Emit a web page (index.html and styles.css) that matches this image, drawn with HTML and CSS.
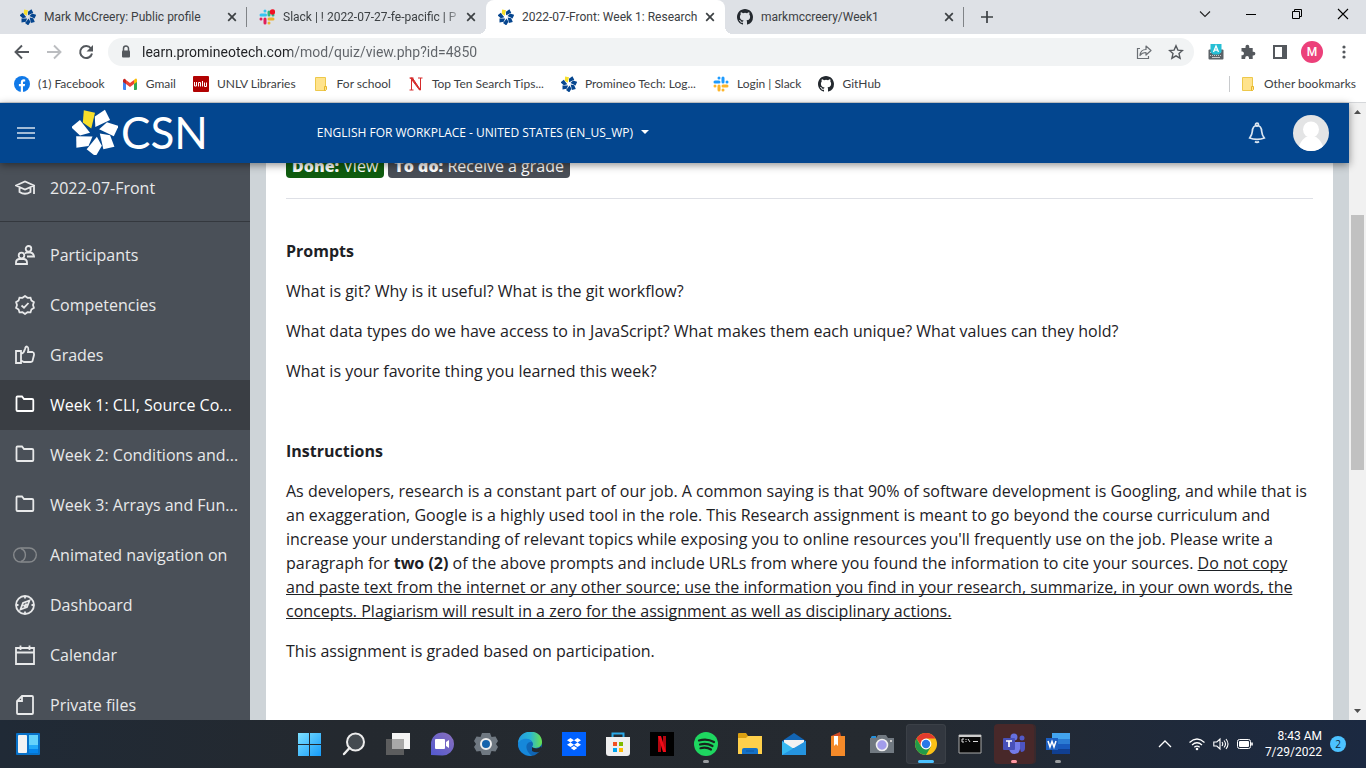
FILE: index.html
```html
<!DOCTYPE html>
<html lang="en">
<head>
<meta charset="utf-8">
<title>2022-07-Front: Week 1: Research</title>
<link rel="stylesheet" href="styles.css">
</head>
<body>
<svg class="defs" aria-hidden="true">
  <defs>
    <path id="petal" d="M-33-64 0-57-11-10-36-28z"/>
    <symbol id="flower" viewBox="-68 -68 136 136">
      <g class="petals"><use href="#petal" class="petal-gold"/><use href="#petal" transform="rotate(51.4)"/><use href="#petal" transform="rotate(102.9)"/><use href="#petal" transform="rotate(154.3)"/><use href="#petal" transform="rotate(205.7)"/><use href="#petal" transform="rotate(257.1)"/><use href="#petal" transform="rotate(308.6)"/></g>
    </symbol>
    <symbol id="github" viewBox="0 0 16 16"><path fill="#24292f" d="M8 0C3.58 0 0 3.58 0 8c0 3.54 2.29 6.53 5.47 7.59.4.07.55-.17.55-.38 0-.19-.01-.82-.01-1.49-2.01.37-2.53-.49-2.69-.94-.09-.23-.48-.94-.82-1.13-.28-.15-.68-.52-.01-.53.63-.01 1.08.58 1.23.82.72 1.21 1.87.87 2.33.66.07-.52.28-.87.51-1.07-1.78-.2-3.64-.89-3.64-3.95 0-.87.31-1.59.82-2.15-.08-.2-.36-1.02.08-2.12 0 0 .67-.21 2.2.82a7.6 7.6 0 0 1 4 0c1.53-1.04 2.2-.82 2.2-.82.44 1.1.16 1.92.08 2.12.51.56.82 1.27.82 2.15 0 3.07-1.87 3.75-3.65 3.95.29.25.54.73.54 1.48 0 1.07-.01 1.93-.01 2.2 0 .21.15.46.55.38A8 8 0 0 0 16 8c0-4.42-3.58-8-8-8z"/></symbol>
    <symbol id="close" viewBox="0 0 16 16"><path d="M4.200 4.200l7.600 7.600M11.800 4.200l-7.600 7.600" stroke="#3c4043" stroke-width="1.700" fill="none"/></symbol>
    <symbol id="bm-folder" viewBox="0 0 16 16"><path d="M2.500 1.500h10v13h-10z" fill="#ffe38c" stroke="#edc84b"/><path d="M11.500 10.500h2v3l-1 1h-1z" fill="#ffe38c" stroke="#e7b72b"/></symbol>
    <symbol id="folder" viewBox="0 0 20 20"><path d="M1.500 2.500q0-1 1-1h4.500l2 2.500h8q1.300 0 1.300 1.300v9.700q0 1-1 1h-14.800q-1 0-1-1z"/></symbol>
  </defs>
</svg>

<header class="browser">
  <div class="tabs">
    <div class="tab tab-divided"><svg class="i16 blue-flower"><use href="#flower"/></svg><span class="tab-title">Mark McCreery: Public profile</span><button class="close" aria-label="Close tab"><svg class="i16"><use href="#close"/></svg></button></div>
    <div class="tab"><svg class="i16" viewBox="0 0 16 16"><g fill="none" stroke-width="3" stroke-linecap="round"><path stroke="#36c5f0" d="M6 2v0M2 6h4.500"/><path stroke="#2eb67d" d="M10 6V3M14 6v0"/><path stroke="#e01e5a" d="M6 10v4M2 10v0"/><path stroke="#ecb22e" d="M10 14v0M10 10h4"/></g><circle cx="13.500" cy="3" r="2.700" fill="#f11022"/></svg><span class="tab-title tab-fade">Slack | ! 2022-07-27-fe-pacific | P</span><button class="close" aria-label="Close tab"><svg class="i16"><use href="#close"/></svg></button></div>
    <div class="tab tab-active"><svg class="i16 blue-flower"><use href="#flower"/></svg><span class="tab-title">2022-07-Front: Week 1: Research</span><button class="close" aria-label="Close tab"><svg class="i16"><use href="#close"/></svg></button></div>
    <div class="tab tab-divided"><svg class="i16"><use href="#github"/></svg><span class="tab-title">markmccreery/Week1</span><button class="close" aria-label="Close tab"><svg class="i16"><use href="#close"/></svg></button></div>
    <button class="new-tab" aria-label="New tab"><svg class="i16" viewBox="0 0 16 16"><path d="M8 2v12M2 8h12" stroke="#3c4043" stroke-width="1.700"/></svg></button>
    <div class="window-buttons">
      <button aria-label="Search tabs"><svg class="i16" viewBox="0 0 16 16"><path d="M3 5.500l5 5 5-5" fill="none" stroke="#222" stroke-width="1.100"/></svg></button>
      <button aria-label="Minimize"><svg class="i16" viewBox="0 0 16 16"><path d="M3 8.500h10" stroke="#000"/></svg></button>
      <button aria-label="Restore"><svg class="i16" viewBox="0 0 16 16"><path d="M3.500 5.500h7v7h-7zM5.500 5.500v-2h7v7h-2" fill="none" stroke="#000"/></svg></button>
      <button aria-label="Close window"><svg class="i16" viewBox="0 0 16 16"><path d="M3 3l10 10M13 3L3 13" stroke="#000" stroke-width="1.100"/></svg></button>
    </div>
  </div>

  <div class="toolbar">
    <button class="tool" aria-label="Back"><svg class="i16" viewBox="0 0 16 16"><path d="M15 8H2M8 1.500L1.500 8 8 14.500" fill="none" stroke="#54585d" stroke-width="1.900"/></svg></button>
    <button class="tool" aria-label="Forward"><svg class="i16" viewBox="0 0 16 16"><path d="M1 8h13M8 1.500L14.500 8 8 14.500" fill="none" stroke="#bbbdc0" stroke-width="1.900"/></svg></button>
    <button class="tool" aria-label="Reload"><svg class="i16" viewBox="0 0 16 16"><path d="M13 4.500A6 6 0 1 0 14 9.500" fill="none" stroke="#54585d" stroke-width="2"/><path d="M15 1v6.500H8.500z" fill="#54585d"/></svg></button>
    <div class="omnibox">
      <svg class="lock" viewBox="0 0 16 16"><rect x="4" y="6.500" width="8" height="7" rx="1" fill="#54585d"/><path d="M5.500 7V4.500a2.500 2.500 0 0 1 5 0V7" fill="none" stroke="#54585d" stroke-width="1.500"/></svg>
      <input class="address" type="text" aria-label="Address" value="learn.promineotech.com/mod/quiz/view.php?id=4850">
      <button class="tool" aria-label="Share"><svg class="i16" viewBox="0 0 16 16"><path d="M4 4.500H1.500v10h11V12" fill="none" stroke="#6b6f74" stroke-width="1.200"/><path d="M4 11.500q.5-6 6-6v-3.500l5 4.500-5 4.500V8.500q-4 0-6 3z" fill="none" stroke="#6b6f74" stroke-width="1.200" stroke-linejoin="round"/></svg></button>
      <button class="tool" aria-label="Bookmark"><svg class="i16" viewBox="0 0 16 16"><path d="M8 1.800l1.900 4.300 4.600.4-3.500 3.100 1.100 4.600L8 11.800l-4.100 2.400L5 9.600 1.500 6.500l4.600-.4z" fill="none" stroke="#54585d" stroke-width="1.400"/></svg></button>
    </div>
    <button class="tool" aria-label="Keyboard extension"><svg class="i16" viewBox="0 0 16 16"><path d="M1.500 5.500h13q1 0 1 1V14.500q0 1-1 1h-13q-1 0-1-1V6.500q0-1 1-1z" fill="#5c6267"/><path d="M2 8.500h12M2 11.500h12" stroke="#c8c9ca" stroke-dasharray="1 1"/><path d="M4 13.500h8" stroke="#c8c9ca"/><path d="M2.500 0h11v8L11 10.500H5L2.500 8z" fill="#26bfd5"/><path d="M5.500 8L8 2l2.500 6M6.300 6.200h3.400" fill="none" stroke="#fff" stroke-width="1.300"/></svg></button>
    <button class="tool" aria-label="Extensions"><svg class="i16" viewBox="0 0 16 16"><path d="M1.500 4h4V2.700a1.900 1.900 0 0 1 3.800 0V4h3.400v3.700h.8a1.900 1.900 0 0 1 0 3.800h-.8V15H9v-1a1.900 1.900 0 0 0-3.800 0v1H1.500v-3.700h1a1.900 1.900 0 0 0 0-3.700h-1z" fill="#54585d"/></svg></button>
    <button class="tool" aria-label="Side panel"><svg class="i16" viewBox="0 0 16 16"><path d="M2 2h12v12H2z" fill="none" stroke="#54585d" stroke-width="2"/><path d="M10 2h4v12h-4z" fill="#54585d"/></svg></button>
    <button class="tool profile" aria-label="Profile"><span>M</span></button>
    <button class="tool" aria-label="Menu"><svg class="i16" viewBox="0 0 16 16" fill="#54585d"><circle cx="8" cy="3" r="1.600"/><circle cx="8" cy="8" r="1.600"/><circle cx="8" cy="13" r="1.600"/></svg></button>
  </div>

  <nav class="bookmarks" aria-label="Bookmarks">
    <a href="#"><svg class="i16" viewBox="0 0 16 16"><circle cx="8" cy="8" r="8" fill="#1079e8"/><path d="M6.800 16v-5.700H4.900V8h1.900V6.300c0-2 1.200-3 2.900-3l1.500.1v2h-.9c-1 0-1.300.5-1.300 1.200V8h2.100l-.4 2.300H9V16z" fill="#fff"/></svg>(1) Facebook</a>
    <a href="#"><svg class="i16" viewBox="0 0 16 16"><path d="M1 4h3v10H2q-1 0-1-1z" fill="#4285f4"/><path d="M12 4h3v9q0 1-1 1h-2z" fill="#34a853"/><path d="M4 4l4 3 4-3v4l-4 3-4-3z" fill="#ea4335"/><path d="M1 4.500q0-2 2-1.800L4 4v4L1 6z" fill="#c5221f"/><path d="M12 4q3-3 3 .5V6l-3 2z" fill="#fbbc04"/></svg>Gmail</a>
    <a href="#"><svg class="i16" viewBox="0 0 16 16"><rect width="16" height="16" rx="1" fill="#b10202"/><path d="M1.500 6v4h2V6M5.500 10.500V6.500h2v4M9.500 5v5.500M11.500 6.500v4h2v-4" fill="none" stroke="#fff"/></svg>UNLV Libraries</a>
    <a href="#"><svg class="i16"><use href="#bm-folder"/></svg>For school</a>
    <a href="#"><svg class="i16" viewBox="0 0 16 16"><path d="M1.500 2h4M10 2h4.500M1.500 14h4M3.500 2v12M12.500 2v12" stroke="#d52b2b" stroke-width="1"/><path d="M2.500 2h2l8 12h-1z" fill="#d52b2b" stroke="#d52b2b"/></svg>Top Ten Search Tips...</a>
    <a href="#"><svg class="i16 blue-flower"><use href="#flower"/></svg>Promineo Tech: Log...</a>
    <a href="#"><svg class="i16" viewBox="0 0 16 16"><g fill="none" stroke-width="3" stroke-linecap="round"><path stroke="#1e9bff" d="M6 2v0M2 6h4M10 6V2M14 6v0"/><path stroke="#fdb52b" d="M6 10v4M2 10v0M10 14v0M10 10h4"/></g></svg>Login | Slack</a>
    <a href="#"><svg class="i16"><use href="#github"/></svg>GitHub</a>
    <a class="other" href="#"><svg class="i16"><use href="#bm-folder"/></svg>Other bookmarks</a>
  </nav>
</header>

<div class="viewport">
  <div class="page">
    <header class="site-header">
      <button class="hamburger" aria-label="Toggle navigation"><svg width="20" height="20" viewBox="0 0 20 20"><path d="M1 5h18M1 10h18M1 15h18" stroke="#d7e2ee" stroke-width="1.500"/></svg></button>
      <a class="brand" href="#" aria-label="CSN home"><svg class="brand-flower"><use href="#flower"/></svg><span>CSN</span></a>
      <button class="language">ENGLISH FOR WORKPLACE - UNITED STATES (EN_US_WP)</button>
      <button class="bell" aria-label="Notifications"><svg width="20" height="22" viewBox="0 0 20 22" fill="none" stroke="#dce6f1" stroke-width="1.700"><path d="M10 3.500c-3.500 0-4.500 2.500-4.700 6-.2 3-1 4.300-2.600 6.500 4 1.800 10.600 1.800 14.600 0-1.600-2.200-2.400-3.500-2.600-6.500-.2-3.500-1.200-6-4.700-6z"/><circle cx="10" cy="2.700" r="1.500"/><path d="M8 19.500q2 1.500 4 0" stroke-width="2"/></svg></button>
      <button class="avatar" aria-label="User menu"><svg viewBox="0 0 36 36"><defs><clipPath id="round"><circle cx="18" cy="18" r="18"/></clipPath></defs><g clip-path="url(#round)"><path d="M0 0h36v36H0z" fill="#e3e4e5"/><circle cx="18" cy="14.500" r="8" fill="#fff"/><path d="M5 38C5 29 10 23.500 14 21.500h8c4 2 9 7.500 9 16.500z" fill="#fff"/></g></svg></button>
    </header>
    <div class="columns">
      <nav class="sidebar" aria-label="Course">
        <a href="#"><svg viewBox="0 0 20 20"><path d="M1 7.500l9-4 9 4-9 4zM4.500 9v5q5.500 3.500 11 0V9M19 7.500V16"/></svg>2022-07-Front</a>
        <hr>
        <a href="#"><svg viewBox="0 0 20 20"><circle cx="6.500" cy="10.500" r="2.800"/><path d="M1 19v-1.500q0-3 3-3.500h5q3 .5 3 3.500V19z"/><circle cx="13.500" cy="3.800" r="2.800"/><path d="M10 8.500l1.500-1h4q3 .5 3.500 4h-7"/></svg>Participants</a>
        <a href="#"><svg viewBox="0 0 20 20"><path d="M10 1l2.500 1.800 3-.2.900 2.900 2.500 1.700L18 10l.9 2.800-2.500 1.700-.9 2.900-3-.2L10 19l-2.500-1.800-3 .2-.9-2.900-2.500-1.700L2 10l-.9-2.800 2.500-1.700.9-2.900 3 .2zM6.500 10.500L9 12.700 13.500 8"/></svg>Competencies</a>
        <a href="#"><svg viewBox="0 0 20 20"><path d="M1 6h5v12H1zM6 9q3-1 4-5 .5-2.500 2-2.500 2 .5 1 5.500h4.500q1.800.5 1.500 3l-1.500 6q-.5 1-2 1H9l-3-1.500"/></svg>Grades</a>
        <a class="current" href="#"><svg><use href="#folder"/></svg>Week 1: CLI, Source Co...</a>
        <a href="#"><svg><use href="#folder"/></svg>Week 2: Conditions and...</a>
        <a href="#"><svg><use href="#folder"/></svg>Week 3: Arrays and Fun...</a>
        <a class="animated" href="#"><svg viewBox="0 0 24 20"><rect x=".7" y="3" width="22.600" height="14" rx="7"/><path d="M8 3.500a7 7 0 0 1 0 13"/></svg>Animated navigation on</a>
        <a href="#"><svg viewBox="0 0 20 20"><circle cx="10" cy="10" r="9"/><path d="M14.500 5.500l-2.500 6.500-6.500 2.500L8 8zM8.500 10l1.500 1.500 1.500-3M10 1v2.500M10 16.500V19M1 10h2.500M16.500 10H19"/></svg>Dashboard</a>
        <a href="#"><svg viewBox="0 0 20 20"><path d="M1 3h18v16H1zM1 7.500h18M5.500.5V5M14.500.5V5"/></svg>Calendar</a>
        <a href="#"><svg viewBox="0 0 20 20"><path d="M7 1h10q1 0 1 1v16q0 1-1 1H3q-1 0-1-1V6zM7 1v5H2"/></svg>Private files</a>
      </nav>
      <main class="card">
        <div class="badges"><span class="badge done"><strong>Done:</strong> View</span><span class="badge todo"><strong>To do:</strong> Receive a grade</span></div>
        <section class="section">
          <h2>Prompts</h2>
          <p>What is git? Why is it useful? What is the git workflow?</p>
          <p>What data types do we have access to in JavaScript? What makes them each unique? What values can they hold?</p>
          <p>What is your favorite thing you learned this week?</p>
        </section>
        <section class="section">
          <h2>Instructions</h2>
          <p>As developers, research is a constant part of our job. A common saying is that 90% of software development is Googling, and while that is an exaggeration, Google is a highly used tool in the role. This Research assignment is meant to go beyond the course curriculum and increase your understanding of relevant topics while exposing you to online resources you'll frequently use on the job. Please write a paragraph for <strong>two (2)</strong> of the above prompts and include URLs from where you found the information to cite your sources. <u>Do not copy and paste text from the internet or any other source; use the information you find in your research, summarize, in your own words, the concepts. Plagiarism will result in a zero for the assignment as well as disciplinary actions.</u></p>
          <p>This assignment is graded based on participation.</p>
        </section>
      </main>
    </div>
  </div>
  <div class="scrollbar" aria-hidden="true">
    <svg viewBox="0 0 17 17"><path d="M5 11h7L8.500 7z" fill="#505050"/></svg>
    <div class="track"><div class="thumb"></div></div>
    <svg viewBox="0 0 17 17"><path d="M5 6h7l-3.500 4z" fill="#505050"/></svg>
  </div>
</div>

<footer class="taskbar">
  <button class="widgets" aria-label="Widgets"><svg viewBox="0 0 24 24"><rect y="1" width="24" height="22" rx="1" fill="#0872c9"/><rect x="2" y="3" width="9" height="18" rx="1" fill="#f3f3f3"/><path d="M13 3h9v10h-9z" fill="#65d3fb"/><path d="M13 13h9v4h-9z" fill="#22aaf8"/><path d="M13 17h9v4h-9z" fill="#0485ec"/></svg></button>
  <div class="apps">
    <button aria-label="Start"><svg viewBox="0 0 24 24"><defs><linearGradient id="win" x2="1" y2="1"><stop stop-color="#7de0ff"/><stop offset="1" stop-color="#159bfa"/></linearGradient></defs><path d="M0 1h11v11H0zM12 1h11v11H12zM0 13h11v11H0zM12 13h11v11H12z" fill="url(#win)"/></svg></button>
    <button aria-label="Search"><svg viewBox="0 0 24 24"><circle cx="13.500" cy="10" r="8.500" fill="#454b50" stroke="#ededed" stroke-width="2"/><path d="M7.500 16L2 22" stroke="#ededed" stroke-width="2.400" stroke-linecap="round"/></svg></button>
    <button aria-label="Task view"><svg viewBox="0 0 24 24"><path d="M6 1h18v16H6z" fill="#f4f4f4"/><path d="M0 7h18v16H0z" fill="#666" fill-opacity=".85"/><path d="M6 7h12v10H6z" fill="#a8a8a8"/></svg></button>
    <button aria-label="Chat"><svg viewBox="0 0 24 24"><defs><linearGradient id="chat" x1="1" x2="0" y2="1"><stop stop-color="#8b70bd"/><stop offset="1" stop-color="#5259d0"/></linearGradient></defs><path d="M1 23V12A11.500 11.500 0 1 1 12 23.500z" fill="url(#chat)"/><rect x="5" y="7" width="10" height="10" rx="1" fill="#fff"/><path d="M16 10l3-2v8l-3-2z" fill="#fff"/></svg></button>
    <button aria-label="Settings"><svg viewBox="0 0 24 24"><path d="M8 1h8l1.500 4 4-.5L24 9l-2 3 2 3-2.500 4.500-4-.5-1.500 4H8l-1.500-4-4 .5L0 15l2-3-2-3 2.500-4.500 4 .5z" fill="#6f7881"/><circle cx="12" cy="12" r="5" fill="#1563ac" stroke="#eee" stroke-width="2"/></svg></button>
    <button aria-label="Edge"><svg viewBox="0 0 24 24"><defs><linearGradient id="edge"><stop stop-color="#249be0"/><stop offset=".5" stop-color="#29b5d5"/><stop offset="1" stop-color="#6ae14c"/></linearGradient></defs><circle cx="12" cy="12" r="12" fill="#1066b5"/><path d="M0 11C1-4 24-4 24 10c0 6-7 7-10 5 3-4-1-8-6-7-4 .5-7 2-8 3z" fill="url(#edge)"/><path d="M0 12c2-6 12-7 14-2-7-1-8 8 0 14C5 24 0 18 0 12z" fill="#1688da"/><path d="M14 15c3 2.500 8 1.500 9-1l1 3-3 3q-4 1-7-1z" fill="#23292f"/></svg></button>
    <button aria-label="Dropbox"><svg viewBox="0 0 24 24"><path d="M0 0h24v24H0z" fill="#0061fe"/><path d="M8.500 6l3.500 2.200-3.500 2.300L5 8.200zM15.500 6L19 8.200l-3.500 2.300L12 8.200zM8.500 10.500l3.500 2.300L8.500 15 5 12.800zM15.500 10.500l3.500 2.300-3.500 2.200-3.500-2.200zM12 14l3.300 2-3.300 2.300L8.700 16z" fill="#fff"/></svg></button>
    <button aria-label="Microsoft Store"><svg viewBox="0 0 24 24"><path d="M6.500 8V1.500h11V8" fill="none" stroke="#2aa9e8" stroke-width="2"/><path d="M0 5h24v16q0 3-3 3H3q-3 0-3-3z" fill="#efefef"/><path d="M7 10h4v4H7z" fill="#f25022"/><path d="M13 10h4v4h-4z" fill="#7fba00"/><path d="M7 16h4v4H7z" fill="#00a4ef"/><path d="M13 16h4v4h-4z" fill="#ffb900"/></svg></button>
    <button aria-label="Netflix"><svg viewBox="0 0 24 24"><path d="M0 0h24v24H0z"/><path d="M8 4h3v16H8zM13 4h3v16h-3z" fill="#b20710"/><path d="M8 4h3l5 16h-3z" fill="#f10b18"/></svg></button>
    <button class="running" aria-label="Spotify"><svg viewBox="0 0 24 24"><circle cx="12" cy="12" r="12" fill="#1ed760"/><path d="M5 8.500q8-2.500 15 1.500M6 12.500q6.500-2 12.500 1.500M6.500 16.200q6-1.500 10.500 1.300" fill="none" stroke="#17251d" stroke-width="2.200" stroke-linecap="round"/></svg></button>
    <button aria-label="File Explorer"><svg viewBox="0 0 24 24"><path d="M0 2q0-1 1-1h7l2 3v5H0z" fill="#dba011"/><path d="M0 6h8l2-2h14v18H0z" fill="#ffd04b"/><path d="M4 22v-4q0-2 2-2h12q2 0 2 2v4z" fill="#1471c7"/><path d="M8 19h8" stroke="#0c579f"/></svg></button>
    <button aria-label="Mail"><svg viewBox="0 0 24 24"><path d="M0 9L12 1l12 8v14H0z" fill="#1265b4"/><path d="M2 8h20v8H2z" fill="#f2f2f2"/><path d="M0 9l12 8 12-8v14H0z" fill="#35b8f1"/><path d="M24 9L0 23h24z" fill="#2594df"/></svg></button>
    <button aria-label="Book reader"><svg viewBox="0 0 24 24"><path d="M5 4l9-4 1 4v4H5z" fill="#cf4b25"/><path d="M5 4h14v20H5z" fill="#f58a29"/><path d="M8 4h4v10l-2-2-2 2z" fill="#fff"/></svg></button>
    <button aria-label="Camera"><svg viewBox="0 0 24 24"><path d="M1 5l1-1h4v3H1z" fill="#2491dd"/><path d="M0 6h6l2-3h8l2 3h6v15H0z" fill="#717981"/><circle cx="12" cy="13" r="5.500" fill="#a29ceb" stroke="#f0f0f0" stroke-width="1.600"/><path d="M20 8h2v2h-2z" fill="#ccc"/></svg></button>
    <button class="running focused" aria-label="Chrome"><svg viewBox="0 0 24 24"><circle cx="12" cy="12" r="11" fill="#fbc116"/><path d="M2.500 6.500A11 11 0 0 1 21.500 6.500H12L8 15z" fill="#e33b2e"/><path d="M2.500 6.500A11 11 0 0 0 12 23l4.800-8.300L7.200 14.700z" fill="#229a49"/><circle cx="12" cy="12" r="5.400" fill="#fff"/><circle cx="12" cy="12" r="4.200" fill="#2978e8"/></svg></button>
    <button aria-label="Command Prompt"><svg viewBox="0 0 24 24"><path d="M1 3h22v18H1z" fill="#080808" stroke="#aaa"/><path d="M1 4h22" stroke="#ccc" stroke-width="2"/><path d="M6 7H4v3h2M8 7v1M8 9v1M10 7l2 3M15 9.500h5" fill="none" stroke="#ddd"/></svg></button>
    <button class="running alert" aria-label="Teams"><svg viewBox="0 0 24 24"><circle cx="12" cy="5" r="3.500" fill="#6570df"/><circle cx="20" cy="6" r="2.500" fill="#535ac9"/><path d="M16 10h7v6q0 4-4 4z" fill="#4d54c2"/><path d="M7 10h11v7q-1 5-5.500 5T7 17z" fill="#737be8"/><rect x="1" y="6" width="12" height="12" rx="1" fill="#4850b8"/><path d="M4 9h6M7 9v6" stroke="#fff" stroke-width="1.700"/></svg></button>
    <button class="running" aria-label="Word"><svg viewBox="0 0 24 24"><path d="M6 1h18v6H6z" fill="#43a4ee"/><path d="M6 7h18v5H6z" fill="#2b7cd3"/><path d="M6 12h18v5H6z" fill="#185abd"/><path d="M6 17h18v5H6z" fill="#103f91"/><path d="M0 6h12v12H0z" fill="#1b5ec0"/><path d="M2 9l2 6 2-5.500L8 15l2-6" fill="none" stroke="#fff" stroke-width="1.500"/></svg></button>
  </div>
  <div class="tray">
    <button class="chevron" aria-label="Hidden icons"><svg class="i16" viewBox="0 0 16 16"><path d="M2 11l6-6 6 6" fill="none" stroke="#fff" stroke-width="1.300"/></svg></button>
    <button class="status" aria-label="Network, volume and battery">
      <svg class="i16" viewBox="0 0 16 16"><path d="M.5 6.500q7.500-7 15 0M3 9q5-4.500 10 0M5.300 11.300q2.700-2.300 5.400 0" fill="none" stroke="#fff" stroke-width="1.200"/><circle cx="8" cy="13" r="1.300" fill="#fff"/></svg>
      <svg class="i16" viewBox="0 0 16 16"><path d="M.8 6h3L7 3v10l-3.200-3h-3zM9 6q1.500 2 0 4M11 4.500q3 3.500 0 7M13 3q4 5 0 10" fill="none" stroke="#fff" stroke-width="1.100"/></svg>
      <svg class="i16" viewBox="0 0 16 16"><rect x=".5" y="3.500" width="13" height="9" rx="2" fill="none" stroke="#fff"/><rect x="2" y="5" width="10" height="6" rx="1" fill="#fff"/><path d="M15 6.500v3" stroke="#fff" stroke-width="1.600"/></svg>
    </button>
    <button class="clock"><span>8:43 AM</span><span>7/29/2022</span></button>
    <span class="count">2</span>
  </div>
</footer>
</body>
</html>
```
FILE: styles.css
```css
* { box-sizing: border-box; }
body {
  margin: 0;
  height: 100vh;
  display: flex;
  flex-direction: column;
  overflow: hidden;
  font-family: "Open Sans", "Noto Sans", sans-serif;
  color: #1d2125;
}
button { border: 0; padding: 0; background: none; font: inherit; color: inherit; display: flex; align-items: center; justify-content: center; }
a { color: inherit; text-decoration: none; }
svg { display: block; flex: none; }
.defs { position: absolute; width: 0; height: 0; }
.i16 { width: 16px; height: 16px; }
.petals { fill: inherit; }
.petal-gold { fill: #f7df2b; }
.blue-flower { fill: #06468f; }

/* Browser chrome */
.browser { flex: none; background: #fff; font-family: Roboto, sans-serif; font-size: 12px; color: #3c4043; border-bottom: 1px solid #d5d7da; }
.tabs { display: flex; height: 34px; padding-left: 8px; background: #dee1e6; }
.tab { position: relative; flex: 0 1 239px; min-width: 0; display: flex; align-items: center; padding: 0 7px 0 12px; }
.tab-divided::after { content: ""; position: absolute; right: 0; top: 7px; width: 1px; height: 20px; background: #808387; }
.tab-active { background: #fff; border-radius: 8px 8px 0 0; }
.tab-active::before, .tab-active::after { content: ""; position: absolute; bottom: 0; width: 8px; height: 8px; }
.tab-active::before { left: -8px; background: radial-gradient(circle at 0 0, transparent 8px, #fff 8px); }
.tab-active::after { right: -8px; background: radial-gradient(circle at 100% 0, transparent 8px, #fff 8px); }
.tab-title { flex: 1; margin-left: 8px; overflow: hidden; white-space: nowrap; }
.tab-fade { margin-right: 4px; mask-image: linear-gradient(to right, #000 92%, rgba(0, 0, 0, .2)); }
.new-tab { width: 46px; }
.window-buttons { margin-left: auto; display: flex; padding-bottom: 6px; }
.window-buttons button { width: 46px; }
.toolbar { display: flex; align-items: center; height: 36px; padding: 0 6px; }
.tool { width: 32px; height: 28px; flex: none; }
.omnibox { flex: 1; display: flex; align-items: center; height: 28px; margin: 0 6px; padding: 0 2px 0 10px; border-radius: 14px; background: #f1f3f4; }
.lock { width: 16px; height: 16px; }
.address {
  flex: 1; min-width: 0; margin-left: 8px; padding: 0; border: 0; outline: 0;
  font: 14px/20px Roboto, sans-serif; color: #202124;
  background: linear-gradient(to right, #202124 150px, #5f6368 150px);
  -webkit-background-clip: text; background-clip: text; -webkit-text-fill-color: transparent;
}
.profile span { width: 22px; height: 22px; border-radius: 50%; background: #ec407a; color: #fff; font-weight: 500; line-height: 22px; }
.bookmarks { display: flex; align-items: center; height: 32px; padding: 0 10px 4px 6px; font-family: Lato, sans-serif; }
.bookmarks a { display: flex; align-items: center; gap: 8px; padding: 0 9px 0 8px; white-space: nowrap; line-height: 16px; }
.bookmarks .other { margin-left: auto; padding: 0 0 0 10px; border-left: 1px solid #c8cacd; }

/* Page and its scroll bar */
.viewport { flex: 1; min-height: 0; display: flex; }
.page { flex: 1; min-width: 0; display: flex; flex-direction: column; background: #ced4d8; }
.site-header { position: relative; z-index: 1; flex: none; display: flex; align-items: center; height: 60px; padding: 0 20px 0 16px; background: #03468f; color: #fff; box-shadow: 0 2px 8px rgba(0, 0, 0, .45); }
.hamburger { width: 20px; height: 40px; }
.brand { display: flex; align-items: center; gap: 3px; margin-left: 36px; padding-bottom: 2px; font: 44px/58px Lato, sans-serif; }
.brand-flower { width: 46px; height: 46px; fill: #fff; }
.language { margin-left: 109px; padding-bottom: 2px; font-size: 12px; font-weight: 500; gap: 8px; white-space: nowrap; }
.language::after { content: ""; border: 4px solid transparent; border-top-color: #fff; border-bottom: 0; }
.bell { margin-left: auto; width: 40px; height: 40px; }
.avatar { width: 36px; height: 36px; margin-left: 16px; }
.avatar svg { width: 36px; height: 36px; }
.columns { flex: 1; min-height: 0; display: flex; overflow: hidden; }
.sidebar { flex: none; width: 250px; background: #4a5058; color: #e8e9ea; font-size: 16px; }
.sidebar a { display: flex; align-items: center; gap: 15px; height: 50px; padding-left: 15px; white-space: nowrap; }
.sidebar svg { width: 20px; height: 20px; fill: none; stroke: currentColor; stroke-width: 1.800; }
.sidebar hr { margin: 8px 0; border: 0; border-top: 1px solid #34383e; }
.sidebar .current { background: #3a3e44; color: #fff; }
.sidebar .animated { padding-left: 13px; gap: 13px; }
.sidebar .animated svg { width: 24px; stroke: #86898c; stroke-width: 1.400; }
.card { flex: 1; min-width: 0; margin: -9px 16px 0; padding: 0 20px; background: #fff; font-size: 16px; line-height: 24px; }
.badges { display: flex; gap: 4px; padding-bottom: 20px; border-bottom: 1px solid #dee0e6; }
.badge { padding: 4px 6px; border-radius: 4px; color: #fff; line-height: 16px; }
.badge strong { font-weight: 800; }
.done { background: #0f5c0f; }
.todo { background: #494e56; }
.section { padding-top: 40px; }
.card h2 { margin: 0 0 16px; font-size: 16px; font-weight: 700; }
.card p { margin: 0 0 16px; }
.card p strong { font-weight: 700; }
.card u { text-decoration-skip-ink: none; }
.scrollbar { flex: none; width: 17px; display: flex; flex-direction: column; background: #f1f1f1; }
.scrollbar svg { width: 17px; height: 17px; }
.track { flex: 1; display: grid; grid-template-rows: 95fr 255fr 233fr; padding: 0 2px; }
.thumb { grid-row: 2; background: #c1c1c1; }

/* Taskbar */
.taskbar { flex: none; display: grid; grid-template-columns: 1fr auto 1fr; align-items: center; height: 48px; background: linear-gradient(to right, #202a36, #24292f 25%, #252a30 65%, #1b2941); color: #fff; }
.widgets { width: 40px; height: 40px; margin-left: 8px; }
.widgets svg, .apps svg { width: 24px; height: 24px; }
.apps { display: flex; gap: 4px; padding-left: 2px; }
.apps button { position: relative; width: 40px; height: 40px; border-radius: 4px; }
.running::after { content: ""; position: absolute; left: 17px; bottom: 1px; width: 6px; height: 3px; border-radius: 2px; background: #9a9da0; }
.apps .focused { background: #32373f; box-shadow: inset 0 0 0 1px #3b4047; }
.focused::after { left: 12px; width: 16px; background: #4cc2ff; }
.apps .alert { background: #482829; box-shadow: 2px 0 #3a292c; }
.alert::after { background: #ff99a4; }
.tray { display: flex; align-items: center; justify-content: flex-end; padding-right: 20px; }
.chevron { width: 32px; height: 40px; }
.status { gap: 8px; padding: 0 8px; height: 40px; }
.clock { flex-direction: column; align-items: flex-end; padding: 0 8px 0 4px; font-family: Roboto, sans-serif; font-size: 12px; line-height: 16px; }
.count { width: 16px; height: 16px; border-radius: 50%; background: #4cc2ff; color: #10263a; font-size: 10px; line-height: 16px; text-align: center; }
```
